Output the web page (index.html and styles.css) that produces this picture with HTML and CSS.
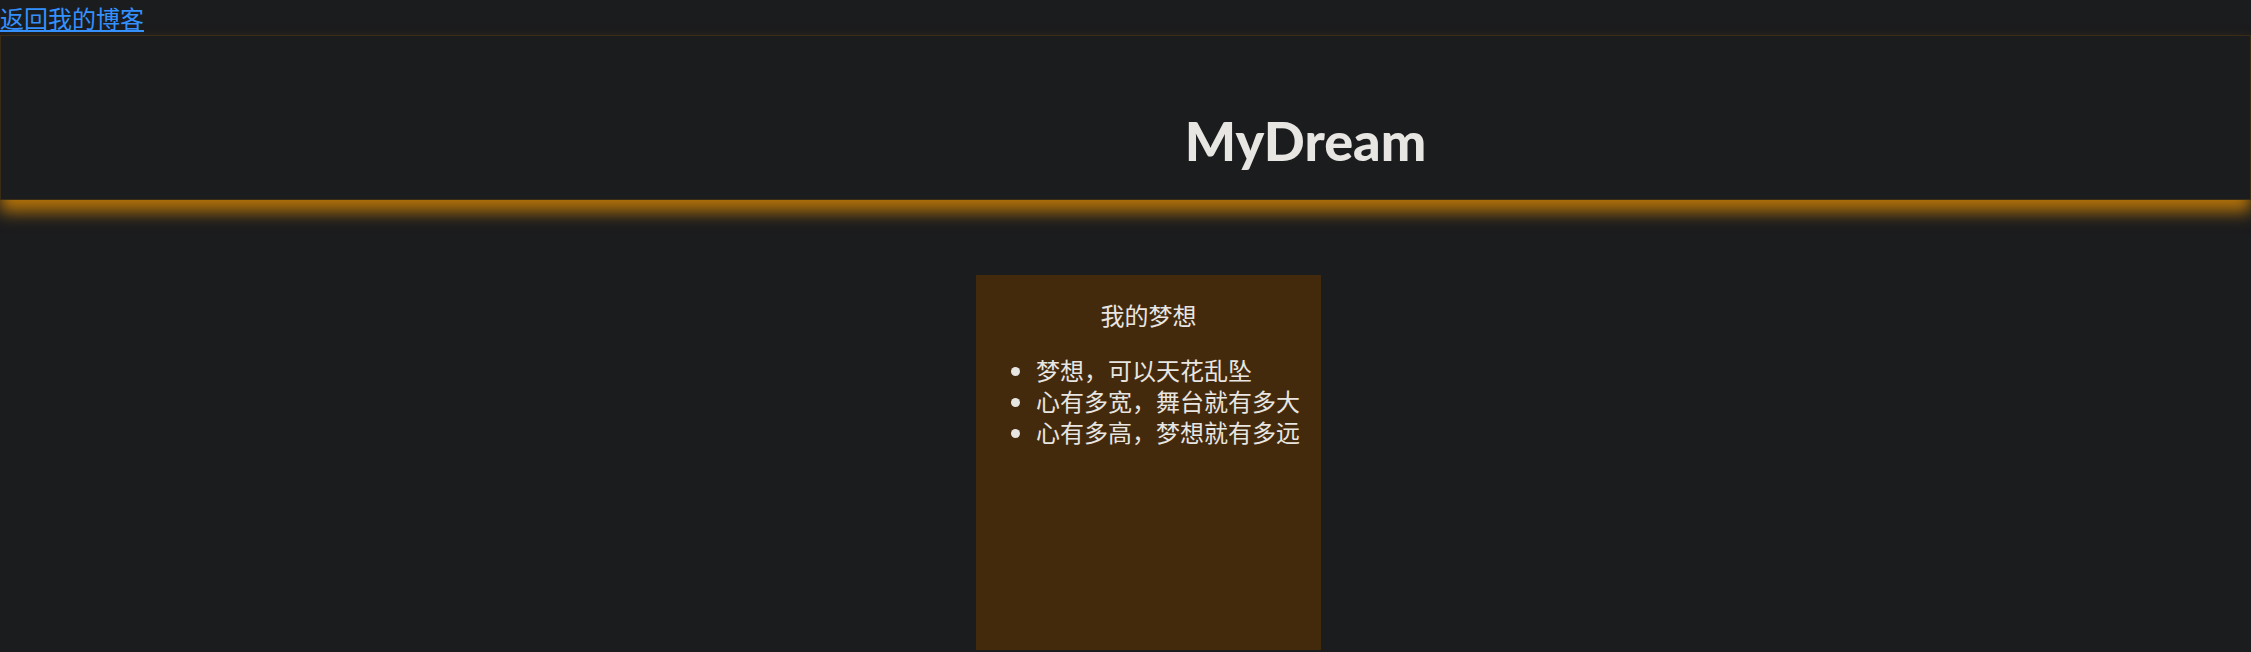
FILE: index.html
```html
<!DOCTYPE html>
<html lang="zh">
<head>
<meta charset="utf-8">
<title>MyDream</title>
<link rel="stylesheet" href="styles.css">
</head>
<body>
<a class="back" href="#">返回我的博客</a>
<header class="head">
  <h1 class="title">MyDream</h1>
</header>
<main class="stage">
  <section class="card">
    <p class="card-title">我的梦想</p>
    <ul class="dreams">
      <li>梦想，可以天花乱坠</li>
      <li>心有多宽，舞台就有多大</li>
      <li>心有多高，梦想就有多远</li>
    </ul>
  </section>
</main>
</body>
</html>
```
FILE: styles.css
```css
html, body {
  margin: 0;
  padding: 0;
  background: #1b1c1e;
  color: #e8e6e3;
  font-family: "Noto Sans", "Noto Sans CJK SC", sans-serif;
  overflow: hidden;
}

.back {
  display: block;
  width: max-content;
  font-size: 24px;
  line-height: 35px;
  height: 35px;
  color: #3391ff;
  text-decoration: underline;
  font-family: "Noto Sans CJK SC", sans-serif;
}

.head {
  box-sizing: border-box;
  width: 100%;
  height: 165px;
  border: 1px solid #3a2c14;
  background: #1b1c1e;
  box-shadow: 0 12px 15px #af700a;
  display: flex;
  align-items: flex-start;
  justify-content: center;
  padding-left: 360px;
  padding-top: 78px;
  position: relative;
  z-index: 1;
}

.title {
  margin: 0;
  font-family: "Lato", "Open Sans", sans-serif;
  font-weight: 900;
  font-size: 54px;
  line-height: 1;
  color: #e8e6e3;
}

.stage {
  display: flex;
  padding-top: 75px;
  padding-left: 976px;
}

.card {
  width: 345px;
  height: 375px;
  background: #442a0c;
  box-sizing: border-box;
  padding-top: 24px;
  font-family: "Noto Sans CJK SC", sans-serif;
  font-size: 24px;
  line-height: 31px;
  color: #e8e6e3;
}

.card-title {
  margin: 0;
  text-align: center;
}

.dreams {
  margin: 24px 0 0;
  padding-left: 60px;
}
```
